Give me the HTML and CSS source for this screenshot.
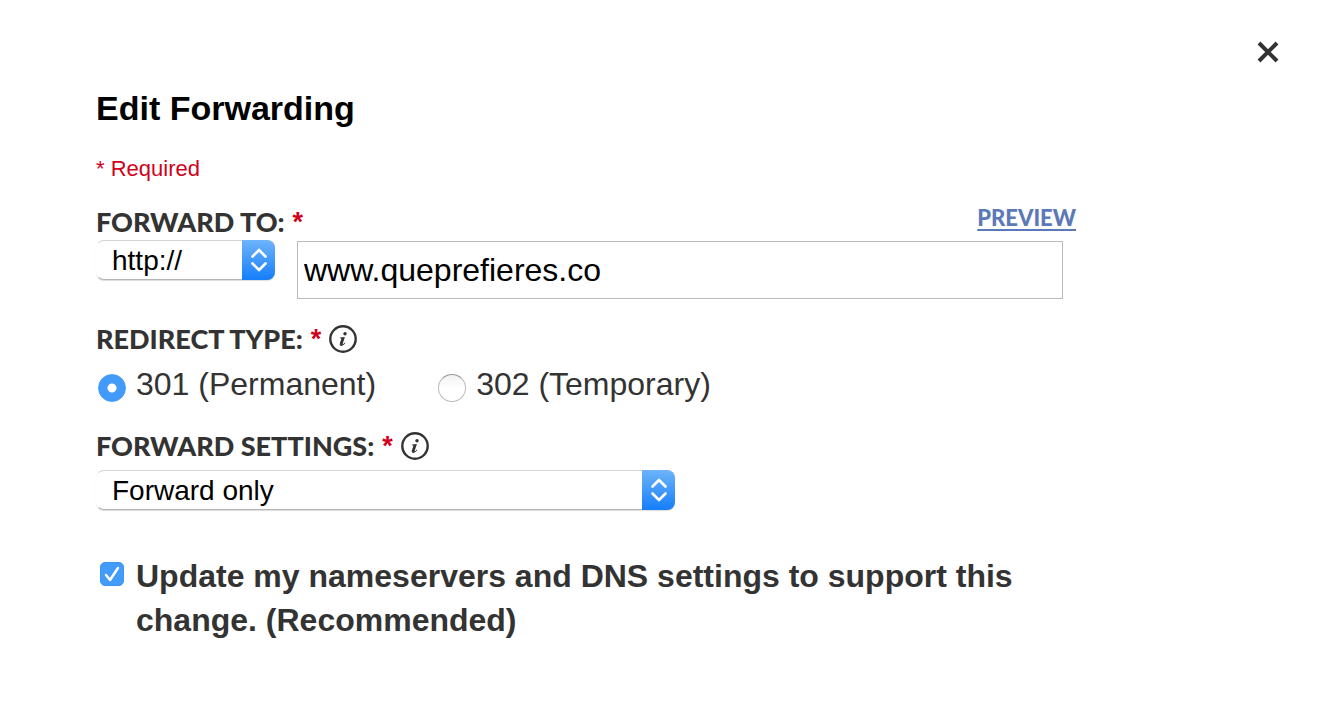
FILE: index.html
```
<!DOCTYPE html>
<html lang="en">
<head>
<meta charset="utf-8">
<title>Edit Forwarding</title>
<meta name="viewport" content="width=device-width, initial-scale=1">
<link rel="stylesheet" href="styles.css">
</head>
<body>
<main class="dialog">
  <header class="dialog-bar">
    <button class="close" type="button" aria-label="Close">
      <svg width="24" height="24" viewBox="0 0 24 24"><path d="M3 3L21 21M21 3L3 21" fill="none" stroke="#333" stroke-width="4"/></svg>
    </button>
  </header>
  <form class="form">
    <h1 class="title">Edit Forwarding</h1>
    <p class="required-note">* Required</p>

    <section class="field">
      <div class="label-row">
        <label class="label" for="address">FORWARD TO: <span class="star">*</span></label>
        <a class="preview" href="#">PREVIEW</a>
      </div>
      <div class="address-row">
        <div class="select select-scheme">
          <select aria-label="Protocol"><option>http://</option><option>https://</option></select>
          <span class="stepper"><svg width="16" height="24" viewBox="0 0 16 24"><path d="M1.500 8.500L8 2L14.500 8.500M1.500 15.500L8 22L14.500 15.500" fill="none" stroke="#fff" stroke-width="2.600" stroke-linecap="round" stroke-linejoin="round"/></svg></span>
        </div>
        <input class="address" id="address" type="text" value="www.queprefieres.co">
      </div>
    </section>

    <fieldset class="field redirect">
      <legend class="label">REDIRECT TYPE: <span class="star">*</span>
        <svg class="info" width="28" height="28" viewBox="0 0 28 28"><circle cx="14" cy="14" r="12.700" fill="none" stroke="#333" stroke-width="2.400"/><circle cx="16" cy="8.800" r="1.700" fill="#333"/><path d="M11 12.600L15.900 11.900L13.700 18.700Q13.500 19.600 14.200 19.200Q15 18.700 15.800 17.500L16.400 17.900Q14.400 21 12.100 20.900Q10.200 20.700 10.800 18.600L12.300 14Q12.600 13.200 11 13.300Z" fill="#333"/></svg>
      </legend>
      <div class="radios">
        <label class="option"><input class="radio" type="radio" name="redirect" checked><span>301 (Permanent)</span></label>
        <label class="option"><input class="radio" type="radio" name="redirect"><span>302 (Temporary)</span></label>
      </div>
    </fieldset>

    <section class="field">
      <label class="label" for="settings">FORWARD SETTINGS: <span class="star">*</span>
        <svg class="info" width="28" height="28" viewBox="0 0 28 28"><circle cx="14" cy="14" r="12.700" fill="none" stroke="#333" stroke-width="2.400"/><circle cx="16" cy="8.800" r="1.700" fill="#333"/><path d="M11 12.600L15.900 11.900L13.700 18.700Q13.500 19.600 14.200 19.200Q15 18.700 15.800 17.500L16.400 17.900Q14.400 21 12.100 20.900Q10.200 20.700 10.800 18.600L12.300 14Q12.600 13.200 11 13.300Z" fill="#333"/></svg>
      </label>
      <div class="select select-settings">
        <select id="settings"><option>Forward only</option><option>Forward with masking</option></select>
        <span class="stepper"><svg width="16" height="24" viewBox="0 0 16 24"><path d="M1.500 8.500L8 2L14.500 8.500M1.500 15.500L8 22L14.500 15.500" fill="none" stroke="#fff" stroke-width="2.600" stroke-linecap="round" stroke-linejoin="round"/></svg></span>
      </div>
    </section>

    <div class="update">
      <span class="check-box">
        <input class="check" id="update" type="checkbox" checked>
        <svg class="tick" width="24" height="24" viewBox="0 0 24 24"><path d="M6 13L10 18L18 6" fill="none" stroke="#fff" stroke-width="2.500" stroke-linecap="round" stroke-linejoin="round"/></svg>
      </span>
      <label class="update-text" for="update">Update my nameservers and DNS settings to support this change. (Recommended)</label>
    </div>
  </form>
</main>
</body>
</html>
```
FILE: styles.css
```
* { box-sizing: border-box; }
body {
  margin: 0;
  background: #fff;
  color: #333;
  font-family: "Liberation Sans", Arial, sans-serif;
}
.dialog { padding: 40px; }
.dialog-bar { display: flex; justify-content: flex-end; }
.close {
  display: flex;
  padding: 0;
  border: 0;
  background: none;
  cursor: pointer;
}
.form { max-width: 1036px; padding: 24px 0 0 56px; }
.title {
  margin: 0;
  color: #000;
  font-size: 34px;
  line-height: 40px;
}
.required-note {
  margin: 28px 0 0;
  color: #d0021b;
  font-size: 22px;
  line-height: 26px;
}
.field { margin: 24px 0 0; padding: 0; border: 0; }
.label-row {
  display: flex;
  justify-content: space-between;
  align-items: flex-start;
  padding-bottom: 2px;
}
.label {
  display: flex;
  align-items: center;
  gap: 8px;
  padding: 0;
  font-family: Lato, sans-serif;
  font-size: 27px;
  font-weight: 900;
  line-height: 32px;
}
.info { flex: none; }
.star { color: #d0021b; font-family: "Liberation Sans", Arial, sans-serif; }
.preview {
  color: #5b79b8;
  font-family: Lato, sans-serif;
  font-size: 22px;
  font-weight: 900;
  line-height: 24px;
  text-decoration-thickness: 2px;
  text-underline-offset: 3px;
}
.address-row { display: flex; align-items: flex-start; gap: 22px; padding-right: 13px; }
.select { display: grid; height: 40px; }
.select-scheme { width: 179px; flex: none; }
.select-settings { width: 579px; max-width: 100%; margin-top: 8px; }
.select select {
  grid-area: 1 / 1;
  width: 100%;
  padding: 0 40px 0 15px;
  border: 1px solid #d4d4d4;
  border-left-color: transparent;
  border-bottom-color: #b4b4b4;
  border-radius: 8px;
  background: #fff;
  color: #000;
  box-shadow: 0 1px 1px #ddd;
  appearance: none;
  font: 28px "Liberation Sans", Helvetica, sans-serif;
}
.stepper {
  grid-area: 1 / 1;
  justify-self: end;
  display: flex;
  align-items: center;
  justify-content: center;
  width: 33px;
  border-radius: 0 8px 8px 0;
  background: linear-gradient(#6eb4fa, #157efb);
  pointer-events: none;
}
.address {
  flex: 1;
  min-width: 0;
  height: 58px;
  margin-top: 1px;
  padding: 0 6px;
  border: 1px solid #bbb;
  color: #000;
  font: 32px "Liberation Sans", Arial, sans-serif;
}
.radios { display: flex; flex-wrap: wrap; gap: 62px; padding: 9px 0 2px 2px; }
.option { display: flex; align-items: center; gap: 10px; font-size: 32px; line-height: 40px; }
.radio {
  width: 28px;
  height: 28px;
  margin: 8px 0 0;
  border: 1px solid #bbb;
  border-top-color: #999;
  border-radius: 50%;
  background: linear-gradient(#f2f2f2, #fff 50%);
  appearance: none;
}
.radio:checked { border-color: #459df9; background: radial-gradient(circle, #fff 4px, #429bfa 5px); }
.update { display: flex; align-items: flex-start; gap: 12px; margin-top: 44px; padding-left: 4px; }
.check-box { display: grid; flex: none; margin-top: 8px; }
.check {
  grid-area: 1 / 1;
  width: 24px;
  height: 24px;
  margin: 0;
  border: 1px solid #bbb;
  border-radius: 5px;
  appearance: none;
}
.check:checked { border-color: #3c96f8; background: #439cfa; }
.tick { grid-area: 1 / 1; pointer-events: none; }
.update-text { max-width: 900px; font-size: 32px; font-weight: bold; line-height: 44px; }
```
